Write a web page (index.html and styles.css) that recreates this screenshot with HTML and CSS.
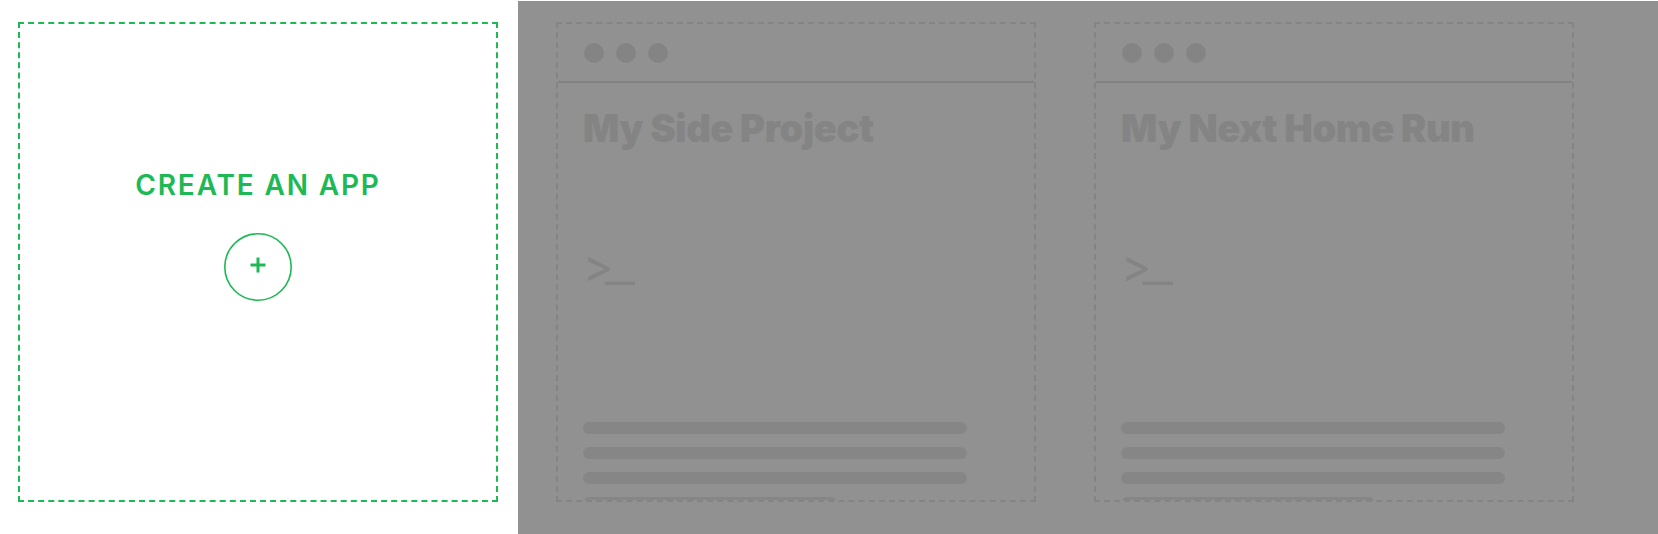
FILE: index.html
```html
<!DOCTYPE html>
<html lang="en">
<head>
<meta charset="utf-8">
<title>Apps</title>
<link rel="stylesheet" href="styles.css">
</head>
<body>
<main class="apps">
  <section class="card card-create">
    <h2 class="create-title">CREATE AN APP</h2>
    <button class="create-btn" aria-label="Create an app">
      <svg width="68" height="68" viewBox="0 0 68 68" aria-hidden="true">
        <circle cx="34" cy="34" r="33.2" fill="none" stroke="#1db954" stroke-width="1.6"/>
        <path d="M26.5 32H41.5M34 24.5V39.5" fill="none" stroke="#1db954" stroke-width="3"/>
      </svg>
    </button>
  </section>

  <section class="card card-app">
    <div class="app-bar">
      <span class="dot"></span><span class="dot"></span><span class="dot"></span>
    </div>
    <div class="app-body">
      <h3 class="app-name">My Side Project</h3>
      <div class="prompt">&gt;<span class="cursor">_</span></div>
      <div class="lines">
        <span class="line"></span>
        <span class="line"></span>
        <span class="line"></span>
        <span class="line short"></span>
      </div>
    </div>
  </section>

  <section class="card card-app">
    <div class="app-bar">
      <span class="dot"></span><span class="dot"></span><span class="dot"></span>
    </div>
    <div class="app-body">
      <h3 class="app-name">My Next Home Run</h3>
      <div class="prompt">&gt;<span class="cursor">_</span></div>
      <div class="lines">
        <span class="line"></span>
        <span class="line"></span>
        <span class="line"></span>
        <span class="line short"></span>
      </div>
    </div>
  </section>
</main>
<div class="dim"></div>
</body>
</html>
```

FILE: styles.css
```css
html, body {
  margin: 0;
  padding: 0;
  background: #ffffff;
}

body {
  width: 1658px;
  height: 534px;
  overflow: hidden;
  font-family: "Inter", "Liberation Sans", sans-serif;
}

.apps {
  display: flex;
  gap: 58px;
  padding: 22px 0 0 18px;
}

.card {
  box-sizing: border-box;
  flex: 0 0 480px;
  width: 480px;
  height: 480px;
  border: 2px dashed #e8e8e8;
  overflow: hidden;
}

/* create card */
.card-create {
  border-color: #1db954;
  display: flex;
  flex-direction: column;
  align-items: center;
  padding-top: 147px;
}

.create-title {
  margin: 0;
  font-size: 28px;
  line-height: 28px;
  font-weight: 600;
  letter-spacing: 1.85px;
  color: #1db954;
}

.create-btn {
  margin-top: 34px;
  padding: 0;
  border: 0;
  background: none;
  width: 68px;
  height: 68px;
  display: block;
}

.create-btn svg {
  display: block;
}

/* placeholder app cards */
.app-bar {
  height: 57px;
  border-bottom: 2px solid #e6e6e6;
  display: flex;
  align-items: center;
  gap: 12px;
  padding-left: 25.5px;
}

.dot {
  width: 20px;
  height: 20px;
  border-radius: 50%;
  background: #e8e8e8;
}

.app-body {
  padding: 26px 0 0 25px;
}

.app-name {
  margin: 0;
  font-size: 38px;
  line-height: 38px;
  font-weight: 900;
  letter-spacing: -0.4px;
  color: #e8e8e8;
}

.prompt {
  margin-top: 96px;
  height: 44px;
  font-size: 46px;
  line-height: 44px;
  font-weight: 400;
  letter-spacing: -8px;
  color: #e8e8e8;
  white-space: nowrap;
}

.cursor {
  font-family: "Liberation Sans", sans-serif;
  font-size: 52px;
  line-height: 0;
  letter-spacing: 0;
  vertical-align: 7px;
}

.lines {
  margin-top: 135px;
  display: flex;
  flex-direction: column;
  gap: 13px;
}

.line {
  display: block;
  flex: 0 0 12px;
  width: 384px;
  height: 12px;
  border-radius: 6px;
  background: #ececec;
}

.line.short {
  width: 254px;
}

/* dimming overlay over the rest of the page */
.dim {
  position: fixed;
  top: 1px;
  left: 518px;
  right: 0;
  bottom: 0;
  background: rgba(0, 0, 0, 0.43);
}
```
